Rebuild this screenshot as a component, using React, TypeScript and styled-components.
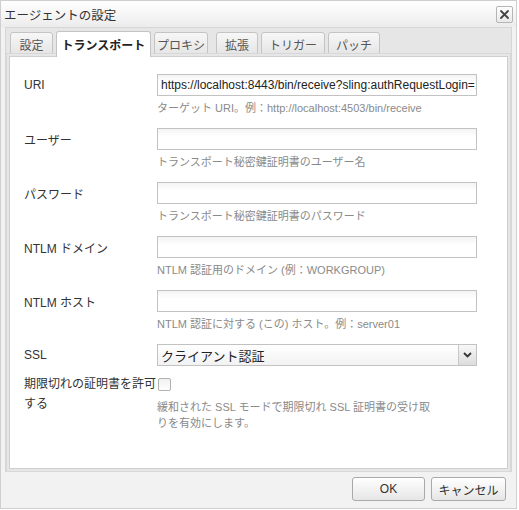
import React from "react";
import styled, { createGlobalStyle } from "styled-components";

const Global = createGlobalStyle`
  html, body { margin: 0; padding: 0; background: #ffffff; }
  body { font-family: "Liberation Sans", "Noto Sans CJK JP", sans-serif; font-size: 12px; color: #333; }
  * { box-sizing: border-box; }
`;

const Dialog = styled.div`
  width: 517px;
  height: 509px;
  border: 1px solid #cfcfcf;
  background: #f2f2f2;
  display: flex;
  flex-direction: column;
`;

const Header = styled.div`
  height: 26px;
  flex: none;
  display: flex;
  align-items: center;
  justify-content: space-between;
  padding: 0 3px 0 3px;
  background: linear-gradient(#ffffff, #ececec);
`;

const Title = styled.span`
  font-size: 12.5px;
  color: #333;
`;

const CloseBtn = styled.div`
  width: 17px;
  height: 17px;
  border: 1px solid #b5b5b5;
  border-radius: 2px;
  background: linear-gradient(#ffffff, #e9e9e9);
  display: flex;
  align-items: center;
  justify-content: center;
`;

const Body = styled.div`
  flex: 1;
  padding: 0 4px 0 4px;
  display: flex;
  flex-direction: column;
`;

const TabFrame = styled.div`
  border: 1px solid #d6d6d6;
  background: #e6e6e6;
  padding: 3px 4px 0 4px;
  display: flex;
  flex-direction: column;
`;

const TabStrip = styled.div`
  display: flex;
  align-items: flex-end;
  gap: 3px;
  height: 25px;
`;

const Tab = styled.div<{ $active?: boolean; $w: number; $ml?: number }>`
  width: ${(p) => p.$w}px;
  margin-left: ${(p) => p.$ml ?? 0}px;
  height: ${(p) => (p.$active ? 26 : 24)}px;
  margin-bottom: ${(p) => (p.$active ? -1 : 0)}px;
  border: 1px solid #c4c4c4;
  border-bottom: ${(p) => (p.$active ? "none" : "1px solid #c4c4c4")};
  border-radius: 3px 3px 0 0;
  background: ${(p) => (p.$active ? "#ffffff" : "linear-gradient(#f7f7f7, #e4e4e4)")};
  color: ${(p) => (p.$active ? "#222" : "#555")};
  font-weight: ${(p) => (p.$active ? "bold" : "normal")};
  font-size: 12px;
  display: flex;
  align-items: center;
  justify-content: center;
  position: relative;
  z-index: ${(p) => (p.$active ? 2 : 1)};
`;

const Panel = styled.div`
  height: 413px;
  background: #ffffff;
  border: 1px solid #cfcfcf;
  box-shadow: 0 0 0 2px #e6e6e6, 0 0 0 3px #d8d8d8;
  margin: 0 -1px 2px -1px;
  padding: 17px 28px 0 14px;
  position: relative;
  z-index: 1;
`;

const FormGrid = styled.div`
  display: grid;
  grid-template-columns: 133px 320px;
  row-gap: 0;
`;

const Label = styled.div<{ $wrap?: boolean }>`
  font-size: 12px;
  color: #333;
  display: flex;
  align-items: ${(p) => (p.$wrap ? "flex-start" : "center")};
  height: ${(p) => (p.$wrap ? "auto" : "22px")};
  line-height: ${(p) => (p.$wrap ? "20px" : "normal")};
`;

const Field = styled.div<{ $mb?: number }>`
  display: flex;
  flex-direction: column;
  margin-bottom: ${(p) => p.$mb ?? 13}px;
`;

const Input = styled.div`
  height: 22px;
  width: 320px;
  border: 1px solid #c2c2c2;
  background: linear-gradient(#f3f3f3, #ffffff 40%);
  font-size: 12px;
  color: #222;
  padding: 0 3px;
  display: flex;
  align-items: center;
  white-space: nowrap;
  overflow: hidden;
`;

const Hint = styled.div`
  margin-top: 5px;
  font-size: 11px;
  line-height: 14px;
  color: #8a8a8a;
  white-space: nowrap;
`;

const WrapHint = styled(Hint)`
  margin-top: 8px;
  line-height: 16px;
`;

const Select = styled.div`
  height: 22px;
  width: 320px;
  border: 1px solid #c2c2c2;
  background: linear-gradient(#ffffff, #f2f2f2);
  display: flex;
  align-items: stretch;
`;

const SelectText = styled.div`
  flex: 1;
  font-size: 13px;
  color: #222;
  padding-left: 3px;
  display: flex;
  align-items: center;
`;

const SelectArrow = styled.div`
  width: 18px;
  border-left: 1px solid #c8c8c8;
  background: linear-gradient(#f8f8f8, #dcdcdc);
  display: flex;
  align-items: center;
  justify-content: center;
`;

const Check = styled.div`
  width: 13px;
  height: 13px;
  margin-left: 1px;
  border: 1px solid #b0b0b0;
  border-radius: 2px;
  background: linear-gradient(#f0f0f0, #ffffff);
  margin-top: 4px;
`;

const Footer = styled.div`
  flex: 1;
  display: flex;
  justify-content: flex-end;
  align-items: flex-start;
  gap: 6px;
  padding: 5px 6px 0 0;
`;

const Button = styled.div<{ $w: number }>`
  width: ${(p) => p.$w}px;
  height: 24px;
  border: 1px solid #a9a9a9;
  border-radius: 3px;
  background: linear-gradient(#ffffff, #e6e6e6);
  display: flex;
  align-items: center;
  justify-content: center;
  font-size: 12px;
  color: #333;
`;

const tabs: { label: string; w: number; ml?: number; active?: boolean }[] = [
  { label: "設定", w: 43 },
  { label: "トランスポート", w: 95, active: true },
  { label: "プロキシ", w: 54 },
  { label: "拡張", w: 42, ml: 5 },
  { label: "トリガー", w: 64 },
  { label: "パッチ", w: 52 },
];

const rows = [
  {
    label: "URI",
    value: "https://localhost:8443/bin/receive?sling:authRequestLogin=1",
    hint: "ターゲット URI。例：http://localhost:4503/bin/receive",
  },
  { label: "ユーザー", value: "", hint: "トランスポート秘密鍵証明書のユーザー名" },
  { label: "パスワード", value: "", hint: "トランスポート秘密鍵証明書のパスワード" },
  { label: "NTLM ドメイン", value: "", hint: "NTLM 認証用のドメイン (例：WORKGROUP)" },
  { label: "NTLM ホスト", value: "", hint: "NTLM 認証に対する (この) ホスト。例：server01" },
];

export default function App() {
  return (
    <>
      <Global />
      <Dialog>
        <Header>
          <Title>エージェントの設定</Title>
          <CloseBtn>
            <svg width="11" height="11" viewBox="0 0 11 11">
              <path d="M2 2 L9 9 M9 2 L2 9" stroke="#444" strokeWidth="1.8" strokeLinecap="round" />
            </svg>
          </CloseBtn>
        </Header>
        <Body>
          <TabFrame>
            <TabStrip>
              {tabs.map((t) => (
                <Tab key={t.label} $w={t.w} $ml={t.ml} $active={t.active}>
                  {t.label}
                </Tab>
              ))}
            </TabStrip>
            <Panel>
              <FormGrid>
                {rows.map((r) => (
                  <React.Fragment key={r.label}>
                    <Label>{r.label}</Label>
                    <Field>
                      <Input>{r.value}</Input>
                      <Hint>{r.hint}</Hint>
                    </Field>
                  </React.Fragment>
                ))}
                <Label>SSL</Label>
                <Field $mb={8}>
                  <Select>
                    <SelectText>クライアント認証</SelectText>
                    <SelectArrow>
                      <svg width="9" height="6" viewBox="0 0 9 6">
                        <path d="M1 1 L4.5 4.5 L8 1" stroke="#333" strokeWidth="1.8" fill="none" />
                      </svg>
                    </SelectArrow>
                  </Select>
                </Field>
                <Label $wrap>期限切れの証明書を許可する</Label>
                <Field>
                  <Check />
                  <WrapHint>
                    緩和された SSL モードで期限切れ SSL 証明書の受け取
                    <br />
                    りを有効にします。
                  </WrapHint>
                </Field>
              </FormGrid>
            </Panel>
          </TabFrame>
          <Footer>
            <Button $w={73}>OK</Button>
            <Button $w={75}>キャンセル</Button>
          </Footer>
        </Body>
      </Dialog>
    </>
  );
}
